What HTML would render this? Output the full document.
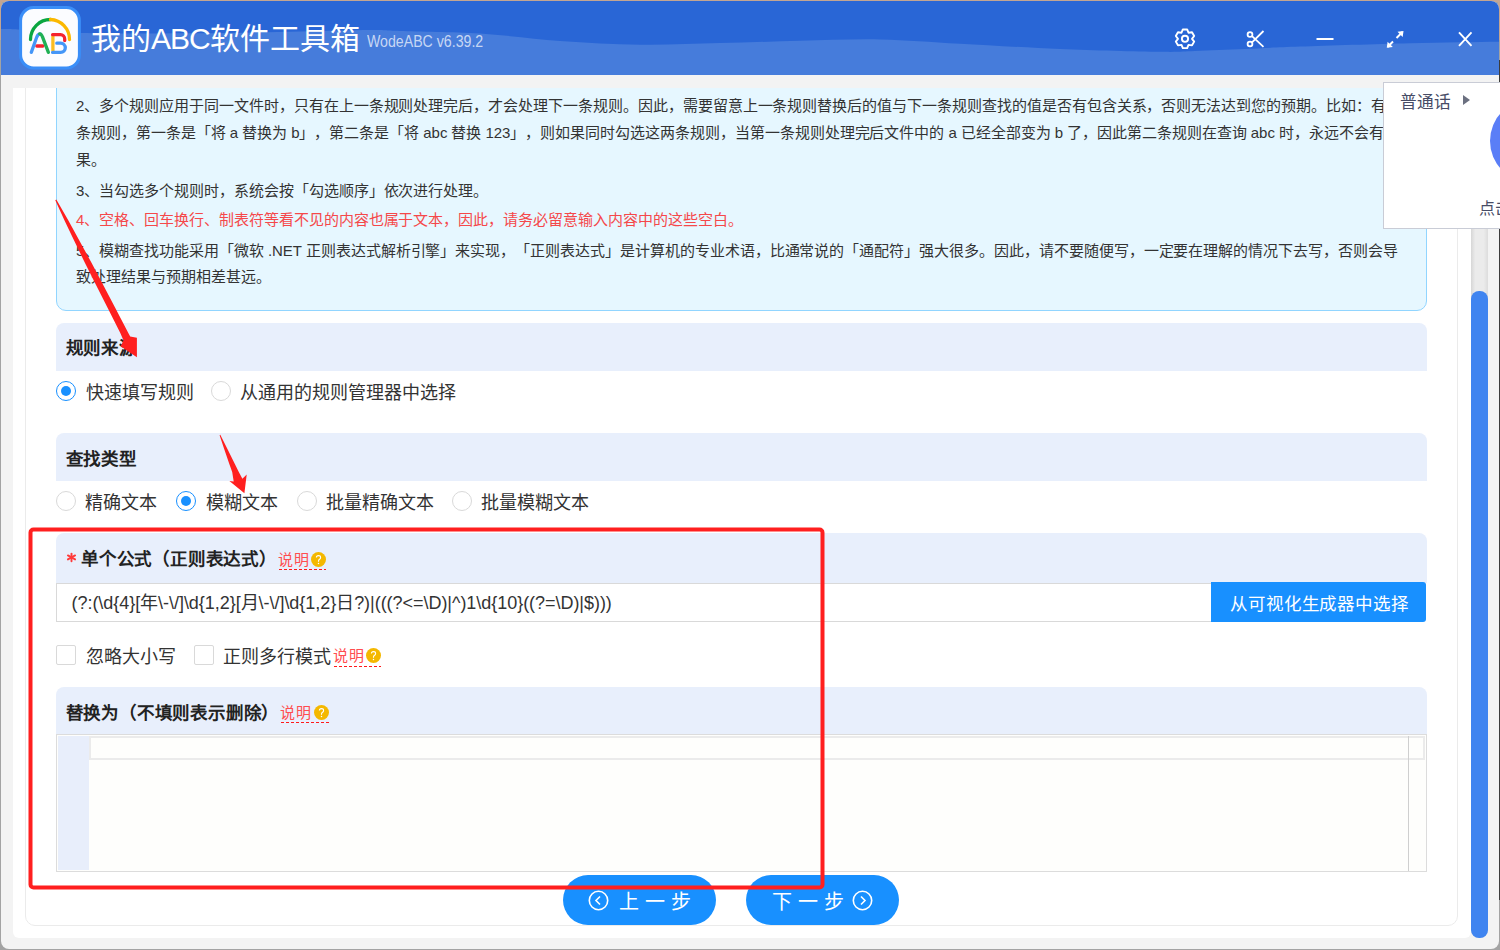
<!DOCTYPE html>
<html lang="zh-CN"><head><meta charset="utf-8">
<style>
*{box-sizing:border-box;margin:0;padding:0}
html,body{text-spacing-trim:space-all;width:1500px;height:950px;overflow:hidden;background:#a3a3a3;font-family:"Liberation Sans",sans-serif;color:#333}
.a{position:absolute}
#win{left:1px;top:1px;width:1498px;height:948px;border-radius:8px;background:#f3f3f3;overflow:hidden}
#title{left:0;top:0;width:1498px;height:74px;background:#2966d6}
.logo{left:18px;top:5px}
.ttl{left:90px;top:18px;font-size:30px;color:#fff;white-space:nowrap;line-height:40px}
.ver{left:366px;top:31px;font-size:16px;color:#c7d7f4;white-space:nowrap;line-height:20px;transform:scaleX(0.885);transform-origin:0 0}
#panel{left:12px;top:87px;width:1458px;height:850px;background:#fff;border-radius:0 0 6px 6px;overflow:hidden}
#card{left:12px;top:-20px;width:1433px;height:858px;border:1px solid #ebebeb;border-radius:10px}
.info{left:43px;top:-20px;width:1371px;height:243px;background:#e6f7ff;border:1px solid #91d5ff;border-radius:10px}
.tl{position:absolute;left:64px;letter-spacing:-0.04px;font-size:15px;white-space:nowrap;line-height:20px;color:#333}
.red{color:#f5484a}
.sh{position:absolute;left:43px;width:1371px;background:#e8effc;border-radius:8px 8px 0 0}
.sht{position:absolute;left:10px;font-size:17.5px;letter-spacing:0.8px;font-weight:bold;color:#222;white-space:nowrap;line-height:24px}
.lab{position:absolute;font-size:18px;white-space:nowrap;line-height:24px;color:#333}
.rad{position:absolute;width:20px;height:20px;border-radius:50%;border:1px solid #d9d9d9;background:#fff}
.rad.on{border-color:#1890ff}
.rad.on::after{content:"";position:absolute;left:4px;top:4px;width:10px;height:10px;border-radius:50%;background:#1890ff}
.chk{position:absolute;width:20px;height:20px;border-radius:2px;border:1px solid #d9d9d9;background:#fff}
.smt{position:absolute;font-size:15px;letter-spacing:1.4px;color:#ff4d4f;white-space:nowrap;line-height:18px}
.ul{position:absolute;height:1.3px;background:repeating-linear-gradient(90deg,#ff1a1a 0 3px,transparent 3px 5px)}
.q{position:absolute}
#scroll{left:1470px;top:87px;width:17px;height:850px;background:linear-gradient(90deg,#d6d6d6,#ebebeb 25%,#ebebeb 75%,#dcdcdc);border-radius:0 0 8px 8px}
#thumb{left:1470px;top:290px;width:17px;height:647px;background:#3f84f0;border-radius:8px}
.pill{position:absolute;height:50px;border-radius:25px;background:#1890ff;color:#fff;font-size:20px;white-space:nowrap}
#popup{left:1383px;top:82px;width:130px;height:147px;background:#fff;border:1px solid #c9ccd6}
</style></head><body>
<div class="a" style="left:0;top:0;width:1500px;height:2px;background:#c3a592"></div><div class="a" style="left:0;top:0;width:2px;height:40px;background:#c3a592"></div><div class="a" style="left:1498px;top:0;width:2px;height:40px;background:#c3a592"></div>
<div class="a" style="left:1499px;top:60px;width:1px;height:840px;background:#3c3c3c"></div>
<div id="win" class="a">
  <div id="title" class="a">
    <svg class="a" style="left:0;top:0" width="1498" height="74"><path d="M-1 28 C8.7 28.1 3.7 27.7 17.0 28.4 C30.3 29.1 48.7 31.4 79.0 32.0 C109.3 32.6 162.3 32.5 199.0 32.3 C235.7 32.0 270.7 31.1 299.0 30.5 C327.3 29.9 352.3 29.1 369.0 29.0 C385.7 28.9 380.7 29.3 399.0 29.9 C417.3 30.5 452.3 30.8 479.0 32.5 C505.7 34.2 532.3 38.1 559.0 40.0 C585.7 41.9 612.3 43.4 639.0 43.7 C665.7 44.1 692.3 42.8 719.0 42.1 C745.7 41.5 772.3 40.4 799.0 39.8 C825.7 39.2 852.3 37.9 879.0 38.4 C905.7 38.9 929.0 41.1 959.0 42.7 C989.0 44.3 1025.7 46.6 1059.0 48.0 C1092.3 49.4 1136.5 50.5 1159.0 50.8 C1181.5 51.1 1179.8 50.5 1194.0 50.0 C1208.2 49.5 1226.5 48.7 1244.0 48.0 C1261.5 47.3 1271.5 46.6 1299.0 45.6 C1326.5 44.6 1375.7 43.0 1409.0 42.2 C1442.3 41.4 1477.3 41.0 1499.0 40.7 L1519 74 L-1 74 Z" fill="#467cdb"/></svg>
    
    <svg class="a" style="left:17px;top:4px" width="64" height="66" viewBox="0 0 64 66">
      <rect x="2.6" y="2.6" width="58.8" height="60.3" rx="13" fill="#fbfcff" stroke="#3a8ef8" stroke-width="3"/>
      <g fill="none" stroke-width="3.3" stroke-linecap="round">
      <path d="M12.5 34.5 A 20 20 0 0 1 32.5 14.5" stroke="#0aa640"/>
      <path d="M32.5 14.5 A 20 20 0 0 1 51.5 34.5" stroke="#fbb800"/>
      <path d="M18.8 41 L24.9 41" stroke="#f5222d"/>
      <path d="M13.3 47.4 L18.6 32.5 Q19.8 29 22.2 28.8" stroke="#4496f8"/>
      <path d="M21.6 28.8 Q23.6 28.9 24.6 32.2 L30.4 47.4" stroke="#1fb055"/>
      <path d="M34.9 30.5 L34.9 46.6" stroke="#fbbd22" stroke-linecap="butt"/>
      <path d="M34.6 29.7 H42.5 A4.2 4.2 0 0 1 46.7 33.9 V35.5" stroke="#f5222d"/>
      <path d="M38.8 38.2 H42.7 A4.6 4.6 0 0 1 42.7 47.4 H34.6" stroke="#4496f8"/>
      </g>
    </svg>
    <svg class="a" style="left:0;top:0" width="1498" height="74">
      <g fill="none" stroke="#fff" stroke-width="2">
        <circle cx="1184" cy="37.8" r="3.1" stroke-width="1.9"/>
        <path d="M1180.50 31.74 L1181.84 28.45 L1186.16 28.45 L1187.50 31.74 L1187.50 31.74 L1191.02 31.25 L1193.18 34.99 L1191.00 37.80 L1191.00 37.80 L1193.18 40.61 L1191.02 44.35 L1187.50 43.86 L1187.50 43.86 L1186.16 47.15 L1181.84 47.15 L1180.50 43.86 L1180.50 43.86 L1176.98 44.35 L1174.82 40.61 L1177.00 37.80 L1177.00 37.80 L1174.82 34.99 L1176.98 31.25 L1180.50 31.74 Z" stroke-linejoin="round" stroke-width="1.9"/>
        <circle cx="1249" cy="33.5" r="2.4" stroke-width="1.8"/>
        <circle cx="1249" cy="43" r="2.4" stroke-width="1.8"/>
        <path d="M1251 35.2 L1262.5 45.8 M1251 41.3 L1262.5 30" stroke-width="1.8"/>
        <path d="M1315.5 38 L1332.5 38"/>
        <path d="M1458 31.3 L1470.5 44.8 M1470.5 31.3 L1458 44.8" stroke-width="1.9"/>
        <path d="M1395.5 37 L1401.5 31 M1392 40.5 L1386.5 46"/>
      </g>
      <path d="M1402.5 30 L1396.5 30.8 L1401.7 36 Z M1385.8 46.8 L1391.8 46 L1386.6 40.8 Z" fill="#fff"/>
    </svg>
    <div class="a ttl">我的<span style="letter-spacing:-1px">ABC</span>软件工具箱</div>
    <div class="a ver">WodeABC v6.39.2</div>
  </div>
  <div id="panel" class="a">
    <div id="card" class="a"></div>
    <div class="info a"></div>
    <div class="tl" style="left:63px;top:7.7px">2、多个规则应用于同一文件时，只有在上一条规则处理完后，才会处理下一条规则。因此，需要留意上一条规则替换后的值与下一条规则查找的值是否有包含关系，否则无法达到您的预期。比如：有两</div>
    <div class="tl" style="left:63px;top:35px">条规则，第一条是「将 a 替换为 b」，第二条是「将 abc 替换 123」，则如果同时勾选这两条规则，当第一条规则处理完后文件中的 a 已经全部变为 b 了，因此第二条规则在查询 abc 时，永远不会有结</div>
    <div class="tl" style="left:63px;top:62px">果。</div>
    <div class="tl" style="left:63px;top:92.5px">3、当勾选多个规则时，系统会按「勾选顺序」依次进行处理。</div>
    <div class="tl red" style="left:63px;top:122.1px">4、空格、回车换行、制表符等看不见的内容也属于文本，因此，请务必留意输入内容中的这些空白。</div>
    <div class="tl" style="left:63px;top:153px">5、模糊查找功能采用「微软 .NET 正则表达式解析引擎」来实现，「正则表达式」是计算机的专业术语，比通常说的「通配符」强大很多。因此，请不要随便写，一定要在理解的情况下去写，否则会导</div>
    <div class="tl" style="left:63px;top:178.9px">致处理结果与预期相差甚远。</div>

    <div class="sh" style="top:235px;height:48px"><div class="sht" style="top:13px;left:9.7px">规则来源</div></div>
    <div class="rad on" style="left:43px;top:292.7px"></div>
    <div class="lab" style="left:72.7px;top:293px">快速填写规则</div>
    <div class="rad" style="left:198.3px;top:292.7px"></div>
    <div class="lab" style="left:227.4px;top:293px">从通用的规则管理器中选择</div>

    <div class="sh" style="top:345px;height:48px"><div class="sht" style="top:13.5px;left:9.7px">查找类型</div></div>
    <div class="rad" style="left:43.4px;top:403px"></div>
    <div class="lab" style="left:72.4px;top:403px">精确文本</div>
    <div class="rad on" style="left:163px;top:403px"></div>
    <div class="lab" style="left:193px;top:403px">模糊文本</div>
    <div class="rad" style="left:283.8px;top:403px"></div>
    <div class="lab" style="left:313.2px;top:403px">批量精确文本</div>
    <div class="rad" style="left:438.5px;top:403px"></div>
    <div class="lab" style="left:467.9px;top:403px">批量模糊文本</div>

    <div class="sh" style="top:445px;height:49.5px">
      <svg class="a" style="left:10px;top:19px" width="11" height="11" viewBox="0 0 11 11"><g stroke="#ff3b3b" stroke-width="1.9" stroke-linecap="round"><path d="M5.5 1.6 V9.2"/><path d="M1.9 3.4 L9.1 7.4"/><path d="M1.9 7.4 L9.1 3.4"/></g></svg>
      <div class="sht" style="top:13.5px;left:25px">单个公式（正则表达式）</div>
      <div class="smt" style="left:222px;top:18px">说明</div><svg class="q" style="left:254.8px;top:19px" width="15" height="15" viewBox="0 0 15 15"><circle cx="7.5" cy="7.5" r="7.5" fill="#f4b800"/><path d="M5.4 5.6 Q5.4 3.6 7.5 3.6 Q9.6 3.6 9.6 5.5 Q9.6 6.8 8.3 7.4 Q7.5 7.8 7.5 9.2 V9.8" fill="none" stroke="#fff" stroke-width="1.1"/><circle cx="7.5" cy="11.6" r="0.75" fill="#fff"/></svg><div class="ul" style="left:223px;top:36px;width:47px"></div>
    </div>
    <div class="a inp" style="left:43px;top:494.5px;width:1156px;height:39.5px;border:1px solid #d9d9d9;border-right:none;background:#fff"></div>
    <div class="lab" style="left:58.5px;top:503px;letter-spacing:-0.04px">(?:(\d{4}[年\-\/]\d{1,2}[月\-\/]\d{1,2}日?)|(((?&lt;=\D)|^)1\d{10}((?=\D)|$)))</div>
    <div class="a" style="left:1198px;top:494px;width:215px;height:40px;background:#1890ff;border-radius:0 3px 3px 0"></div>
    <div class="lab" style="left:1217px;top:504px;color:#fff;font-size:17.5px;letter-spacing:0.88px">从可视化生成器中选择</div>

    <div class="chk" style="left:43.3px;top:557.4px"></div>
    <div class="lab" style="left:73.2px;top:556.9px">忽略大小写</div>
    <div class="chk" style="left:181.4px;top:557.4px"></div>
    <div class="lab" style="left:209.6px;top:556.9px">正则多行模式</div>
    <div class="smt" style="left:320px;top:559px">说明</div><svg class="q" style="left:353px;top:559.9px" width="15" height="15" viewBox="0 0 15 15"><circle cx="7.5" cy="7.5" r="7.5" fill="#f4b800"/><path d="M5.4 5.6 Q5.4 3.6 7.5 3.6 Q9.6 3.6 9.6 5.5 Q9.6 6.8 8.3 7.4 Q7.5 7.8 7.5 9.2 V9.8" fill="none" stroke="#fff" stroke-width="1.1"/><circle cx="7.5" cy="11.6" r="0.75" fill="#fff"/></svg><div class="ul" style="left:321px;top:578px;width:47px"></div>

    <div class="sh" style="top:599px;height:47.5px">
      <div class="sht" style="top:13.5px;left:9.7px">替换为（不填则表示删除）</div>
      <div class="smt" style="left:224px;top:17px">说明</div><svg class="q" style="left:257.9px;top:18px" width="15" height="15" viewBox="0 0 15 15"><circle cx="7.5" cy="7.5" r="7.5" fill="#f4b800"/><path d="M5.4 5.6 Q5.4 3.6 7.5 3.6 Q9.6 3.6 9.6 5.5 Q9.6 6.8 8.3 7.4 Q7.5 7.8 7.5 9.2 V9.8" fill="none" stroke="#fff" stroke-width="1.1"/><circle cx="7.5" cy="11.6" r="0.75" fill="#fff"/></svg><div class="ul" style="left:225px;top:35px;width:48px"></div>
    </div>
    <div class="a" style="left:43px;top:646px;width:1371px;height:138px;border:1px solid #dcdcdc;background:#fefefc">
      <div class="a" style="left:1px;top:1px;width:31px;height:134px;background:#e8eefb"></div>
      <div class="a" style="left:32px;top:1px;width:1336px;height:24px;background:#fefefc;border:2px solid #ebebeb"></div>
      <div class="a" style="left:1351px;top:1px;width:1px;height:135px;background:#cfcfcf"></div>
    </div>

    <div class="pill" style="left:550px;top:787px;width:153px">
      <svg class="a" style="left:25px;top:15px" width="21" height="21" viewBox="0 0 21 21"><circle cx="10.5" cy="10.5" r="9.2" fill="none" stroke="#fff" stroke-width="1.6"/><path d="M12 6.5 L8 10.5 L12 14.5" fill="none" stroke="#fff" stroke-width="1.6"/></svg>
      <div class="a" style="left:56px;top:14px;letter-spacing:6px;line-height:26px">上一步</div>
    </div>
    <div class="pill" style="left:733px;top:787px;width:153px">
      <div class="a" style="left:26px;top:14px;letter-spacing:6px;line-height:26px">下一步</div>
      <svg class="a" style="left:106px;top:15px" width="21" height="21" viewBox="0 0 21 21"><circle cx="10.5" cy="10.5" r="9.2" fill="none" stroke="#fff" stroke-width="1.6"/><path d="M9 6.5 L13 10.5 L9 14.5" fill="none" stroke="#fff" stroke-width="1.6"/></svg>
    </div>
  </div>
  <div id="scroll" class="a"></div>
  <div id="thumb" class="a"></div>
</div>

<div id="popup" class="a">
  <div class="a" style="left:15.5px;top:9px;font-size:16.7px;color:#474c66;white-space:nowrap;line-height:22px">普通话</div>
  <svg class="a" style="left:78px;top:11px" width="10" height="12"><path d="M1 1 L8 6 L1 11 Z" fill="#6b7080"/></svg>
  <div class="a" style="left:106px;top:15.5px;width:84px;height:84px;border-radius:50%;background:#5a7ef7"></div>
  <div class="a" style="left:95px;top:114.5px;font-size:16px;color:#474c66;white-space:nowrap;line-height:22px">点击</div>
</div>
<svg class="a" style="left:0;top:0;position:absolute" width="1500" height="950">
  <rect x="30.5" y="529.5" width="792" height="358" rx="3" fill="none" stroke="#ff1f1f" stroke-width="4"/>
  <path d="M56.3 199.6 L68.1 220 L77.4 237 L91.1 262 L100.6 280 L115.3 308 L128.3 333 L130.2 336.5 L136.9 337.8 L136.9 357.3 L120.6 346.2 L123.5 340.5 L120.3 333 L107.7 308 L93.5 280 L84.5 262 L72.4 237 L64.3 220 L55.3 200.2 Z" fill="#ff1f1f"/>
  <path d="M220.3 434.7 L227.3 448.7 L235.1 464.5 L238.8 472 L242.4 478.7 L246.7 474.4 L244.4 493.3 L229.4 481.1 L233.7 481.5 L232.2 472 L229.5 464.5 L224.1 448.7 L219.6 435.2 Z" fill="#ff1f1f"/>
</svg>
</body></html>
